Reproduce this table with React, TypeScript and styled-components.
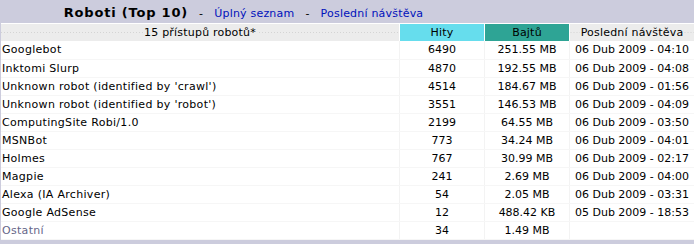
import React from 'react';
import styled, { createGlobalStyle } from 'styled-components';

const GlobalStyle = createGlobalStyle`
  html, body {
    margin: 0;
    padding: 0;
    background: #ffffff;
  }
  body {
    font-family: 'DejaVu Sans', Verdana, sans-serif;
    font-size: 11px;
    color: #000000;
  }
`;

const Border = styled.div`
  width: 694px;
  box-sizing: border-box;
  background-color: #ccccdd;
  padding: 0 0 4px 1px;
`;

const TitleBar = styled.div`
  display: flex;
  height: 23px;
  align-items: center;
  padding-top: 1px;
  box-sizing: border-box;
`;

const TitleCell = styled.div`
  width: 70%;
  text-align: center;
  white-space: nowrap;
  font-size: 11px;
  letter-spacing: 0.2px;
`;

const Title = styled.span`
  font-size: 13px;
  font-weight: bold;
  letter-spacing: 0.8px;
`;

const Dash = styled.span`
  margin: 0 11px;
`;

const TitleLink = styled.a`
  color: #0011bb;
  text-decoration: none;
`;

const Data = styled.table`
  width: 100%;
  border-collapse: collapse;
  background-color: #ffffff;
  border-top: 1px solid #ffffff;
  table-layout: fixed;
`;

const HeadCell = styled.th<{ $bg?: string; $w?: number }>`
  height: 17px;
  padding: 0;
  font-weight: normal;
  font-size: 11px;
  letter-spacing: 0.2px;
  text-align: center;
  white-space: nowrap;
  width: ${(p) => (p.$w ? `${p.$w}px` : 'auto')};
  background-color: ${(p) => p.$bg || '#ececec'};
  border-left: 1px solid #ffffff;
  border-top: 1px dotted #dcdcdc;
  &:first-child {
    border-left: none;
  }
`;

const DottedHead = styled(HeadCell)`
  background-image: linear-gradient(to right, #d4d4d4 1px, transparent 1px);
  background-size: 3px 1px;
  background-repeat: repeat-x;
  background-position: 0 8px;
`;

const HeadLabel = styled.span`
  background-color: #ececec;
  padding: 0 1px;
`;

const Row = styled.tr`
  height: 18px;
`;

const Cell = styled.td<{ $left?: boolean; $muted?: boolean }>`
  padding: 0 0 0 ${(p) => (p.$left ? '1px' : '0')};
  font-size: 11px;
  letter-spacing: ${(p) => (p.$left ? '0.3px' : '0')};
  white-space: nowrap;
  overflow: hidden;
  text-align: ${(p) => (p.$left ? 'left' : 'center')};
  color: ${(p) => (p.$muted ? '#666688' : '#000000')};
  border-bottom: 1px solid #f6f6f6;
  border-left: 1px solid #f3f3f3;
  &:first-child {
    border-left: none;
  }
`;

const robots = [
  ['Googlebot', '6490', '251.55 MB', '06 Dub 2009 - 04:10'],
  ['Inktomi Slurp', '4870', '192.55 MB', '06 Dub 2009 - 04:08'],
  ["Unknown robot (identified by 'crawl')", '4514', '184.67 MB', '06 Dub 2009 - 01:56'],
  ["Unknown robot (identified by 'robot')", '3551', '146.53 MB', '06 Dub 2009 - 04:09'],
  ['ComputingSite Robi/1.0', '2199', '64.55 MB', '06 Dub 2009 - 03:50'],
  ['MSNBot', '773', '34.24 MB', '06 Dub 2009 - 04:01'],
  ['Holmes', '767', '30.99 MB', '06 Dub 2009 - 02:17'],
  ['Magpie', '241', '2.69 MB', '06 Dub 2009 - 04:00'],
  ['Alexa (IA Archiver)', '54', '2.05 MB', '06 Dub 2009 - 03:31'],
  ['Google AdSense', '12', '488.42 KB', '05 Dub 2009 - 18:53'],
];

export default function App() {
  return (
    <>
      <GlobalStyle />
      <Border>
        <TitleBar>
          <TitleCell>
            <Title>Roboti (Top 10)</Title>
            <Dash>-</Dash>
            <TitleLink href="#">Úplný seznam</TitleLink>
            <Dash>-</Dash>
            <TitleLink href="#">Poslední návštěva</TitleLink>
          </TitleCell>
        </TitleBar>
        <Data>
          <thead>
            <tr>
              <DottedHead>
                <HeadLabel>15 přístupů robotů*</HeadLabel>
              </DottedHead>
              <HeadCell $bg="#66dded" $w={84}>Hity</HeadCell>
              <HeadCell $bg="#2ea495" $w={84}>Bajtů</HeadCell>
              <DottedHead $w={124}>
                <HeadLabel>Poslední návštěva</HeadLabel>
              </DottedHead>
            </tr>
          </thead>
          <tbody>
            {robots.map(([name, hits, bytes, last]) => (
              <Row key={name}>
                <Cell $left>{name}</Cell>
                <Cell>{hits}</Cell>
                <Cell>{bytes}</Cell>
                <Cell>{last}</Cell>
              </Row>
            ))}
            <Row>
              <Cell $left $muted>Ostatní</Cell>
              <Cell>34</Cell>
              <Cell>1.49 MB</Cell>
              <Cell></Cell>
            </Row>
          </tbody>
        </Data>
      </Border>
    </>
  );
}
